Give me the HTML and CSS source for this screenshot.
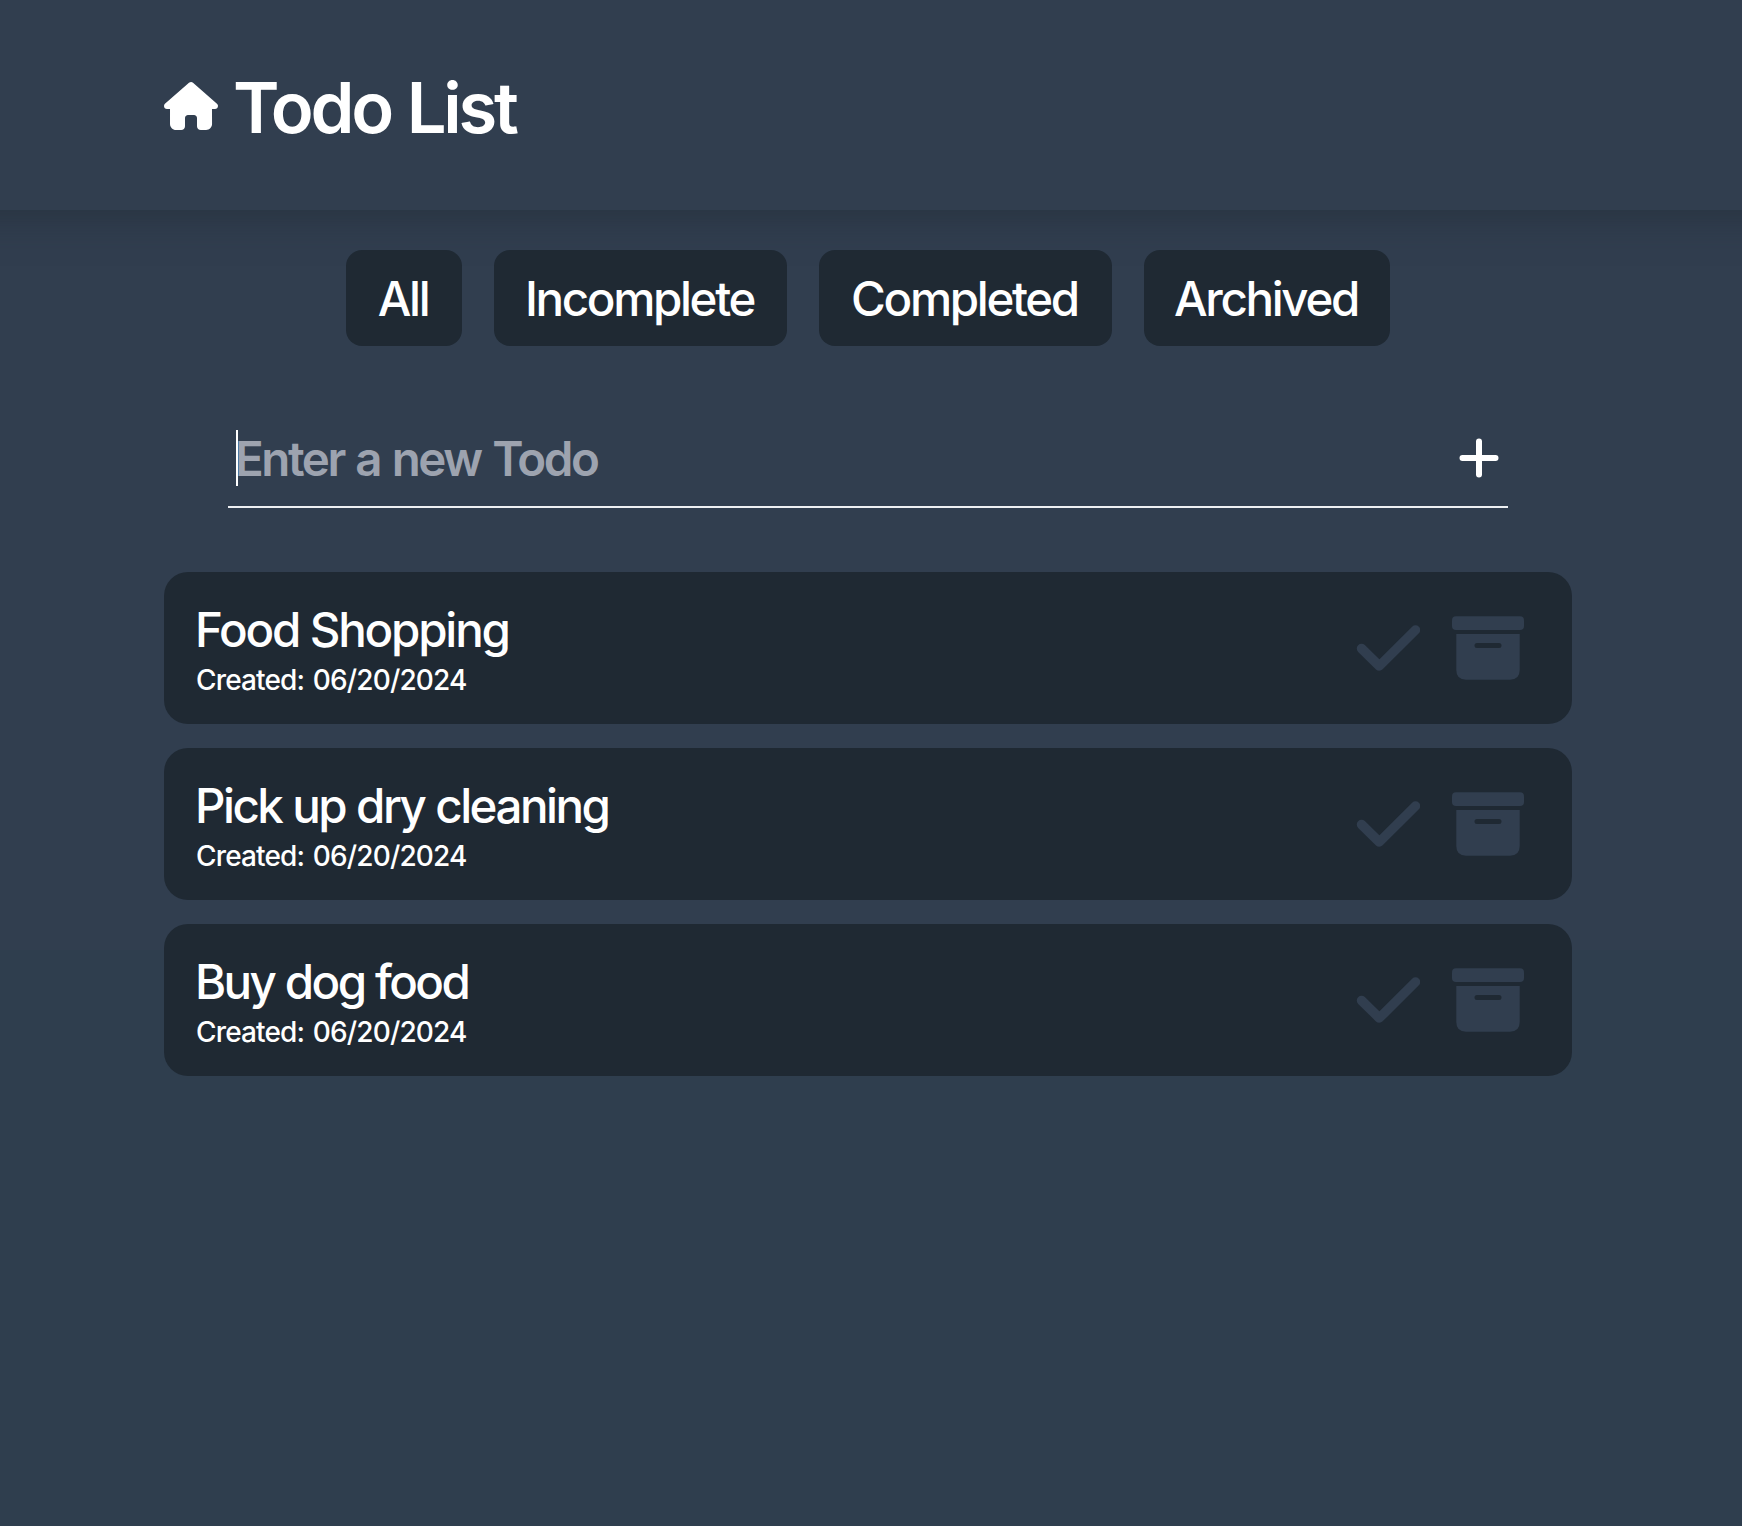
FILE: index.html
```html
<!DOCTYPE html>
<html lang="en">
<head>
<meta charset="utf-8">
<title>Todo List</title>
<link rel="stylesheet" href="styles.css">
</head>
<body>
<svg class="sprite" aria-hidden="true">
  <symbol id="check" viewBox="0 0 64 46"><path d="M5.500 23.500 L23.300 41 L59.500 5" fill="none" stroke="currentColor" stroke-width="9.500" stroke-linecap="round" stroke-linejoin="round"/></symbol>
  <symbol id="archive" viewBox="0 0 72 64"><rect y=".3" width="72" height="13.700" rx="4"/><path fill-rule="evenodd" d="M4.300 18H67.700V54Q67.700 63.700 58 63.700H14Q4.300 63.700 4.300 54ZM25 27Q22.500 27 22.500 29.500T25 32H47Q49.500 32 49.500 29.500T47 27Z"/></symbol>
</svg>
<header class="header">
  <h1 class="title">
    <svg class="home" viewBox="0 0 576 512"><path d="M575.8 255.5c0 18-15 32.1-32 32.1h-32l.7 160.200c.2 35.300-28.400 64.200-63.700 64.200H392c-22.100 0-40-17.900-40-40v-88.300c0-17.700-14.300-32-32-32h-64c-17.700 0-32 14.300-32 32V472c0 22.100-17.900 40-40 40h-55.900c-35.300 0-64-28.700-64-64V287.600H32c-18 0-32-14-32-32.100 0-9 3-17 10-24L266.400 8c7-7 15-8 22-8s15 2 21 7l255.400 224.500c8 7 12 15 11 24z"/></svg>
    <span class="title-text">Todo List</span>
  </h1>
</header>
<main class="main">
  <nav class="filters">
    <button class="filter all">All</button>
    <button class="filter incomplete">Incomplete</button>
    <button class="filter completed">Completed</button>
    <button class="filter archived">Archived</button>
  </nav>
  <div class="entry">
    <span class="caret"></span>
    <span class="placeholder">Enter a new Todo</span>
    <svg class="plus" viewBox="0 0 40 40"><path d="M20 3.500V36.500M3.500 20H36.500" stroke="currentColor" stroke-width="6" stroke-linecap="round"/></svg>
  </div>
  <ul class="todos">
    <li class="todo">
      <div class="info"><div class="name food">Food Shopping</div><div class="date">Created: 06/20/2024</div></div>
      <svg class="check"><use href="#check"/></svg><svg class="archive"><use href="#archive"/></svg>
    </li>
    <li class="todo">
      <div class="info"><div class="name pick">Pick up dry cleaning</div><div class="date">Created: 06/20/2024</div></div>
      <svg class="check"><use href="#check"/></svg><svg class="archive"><use href="#archive"/></svg>
    </li>
    <li class="todo">
      <div class="info"><div class="name buy">Buy dog food</div><div class="date">Created: 06/20/2024</div></div>
      <svg class="check"><use href="#check"/></svg><svg class="archive"><use href="#archive"/></svg>
    </li>
  </ul>
</main>
</body>
</html>
```
FILE: styles.css
```css
* { box-sizing: border-box; }
body { margin: 0; min-height: 1526px; overflow-x: hidden; color: #fff; font-family: Inter, sans-serif; background: linear-gradient(#313e4f 0 950px, #2f3e4e 950px); }
.sprite { display: none; }
.header { height: 210px; margin: 0 -60px; padding: 72px 224px 0; box-shadow: 0 8px 32px rgba(31, 41, 51, .5); }
.title { display: flex; align-items: flex-start; margin: 0; font-size: 70.500px; line-height: 72px; font-weight: 600; white-space: nowrap; }
.home { width: 54px; height: 48px; margin: 10px 15px 0 0; fill: #fff; }
.title-text { letter-spacing: -3.200px; word-spacing: 1px; }
.main { width: 1408px; margin: 40px 0 0 164px; }
.filters { display: flex; justify-content: center; gap: 32px; }
.filter { height: 96px; padding: 2px 2px 0 0; border: 0; border-radius: 16px; background: #1f2933; color: #fff; font: 500 47.500px/60px Inter, sans-serif; letter-spacing: -2.350px; text-align: center; }
.all { width: 116px; }
.incomplete, .completed { width: 293px; }
.archived { width: 246px; }
.entry { display: flex; position: relative; height: 98px; margin: 64px 64px 0; padding: 19px 9px 0 7px; border-bottom: 2px solid #edeff2; }
.caret { position: absolute; left: 8px; top: 20px; width: 2px; height: 56px; background: #fff; }
.placeholder { flex: 1; color: #9da3af; font-size: 47.500px; line-height: 60px; font-weight: 600; letter-spacing: -2.450px; word-spacing: 2px; }
.plus { width: 40px; height: 40px; margin-top: 9px; }
.todos { margin: 64px 0 0; padding: 0; list-style: none; display: grid; gap: 24px; }
.todo { display: flex; height: 152px; padding: 28px 48px 0 31px; border-radius: 24px; background: #1f2933; color: #313e4f; }
.info { flex: 1; color: #fff; }
.name { font-size: 47.500px; line-height: 60px; font-weight: 500; }
.food { letter-spacing: -2.200px; }
.pick { letter-spacing: -2.500px; word-spacing: .700px; }
.buy { letter-spacing: -2.600px; word-spacing: .500px; }
.date { padding-left: 1px; font-size: 28px; line-height: 40px; font-weight: 500; letter-spacing: -.850px; word-spacing: 2px; }
.check { width: 64px; height: 46px; margin: 24.500px 32px 0 0; }
.archive { width: 72px; height: 64px; margin-top: 16px; fill: currentColor; }
```
